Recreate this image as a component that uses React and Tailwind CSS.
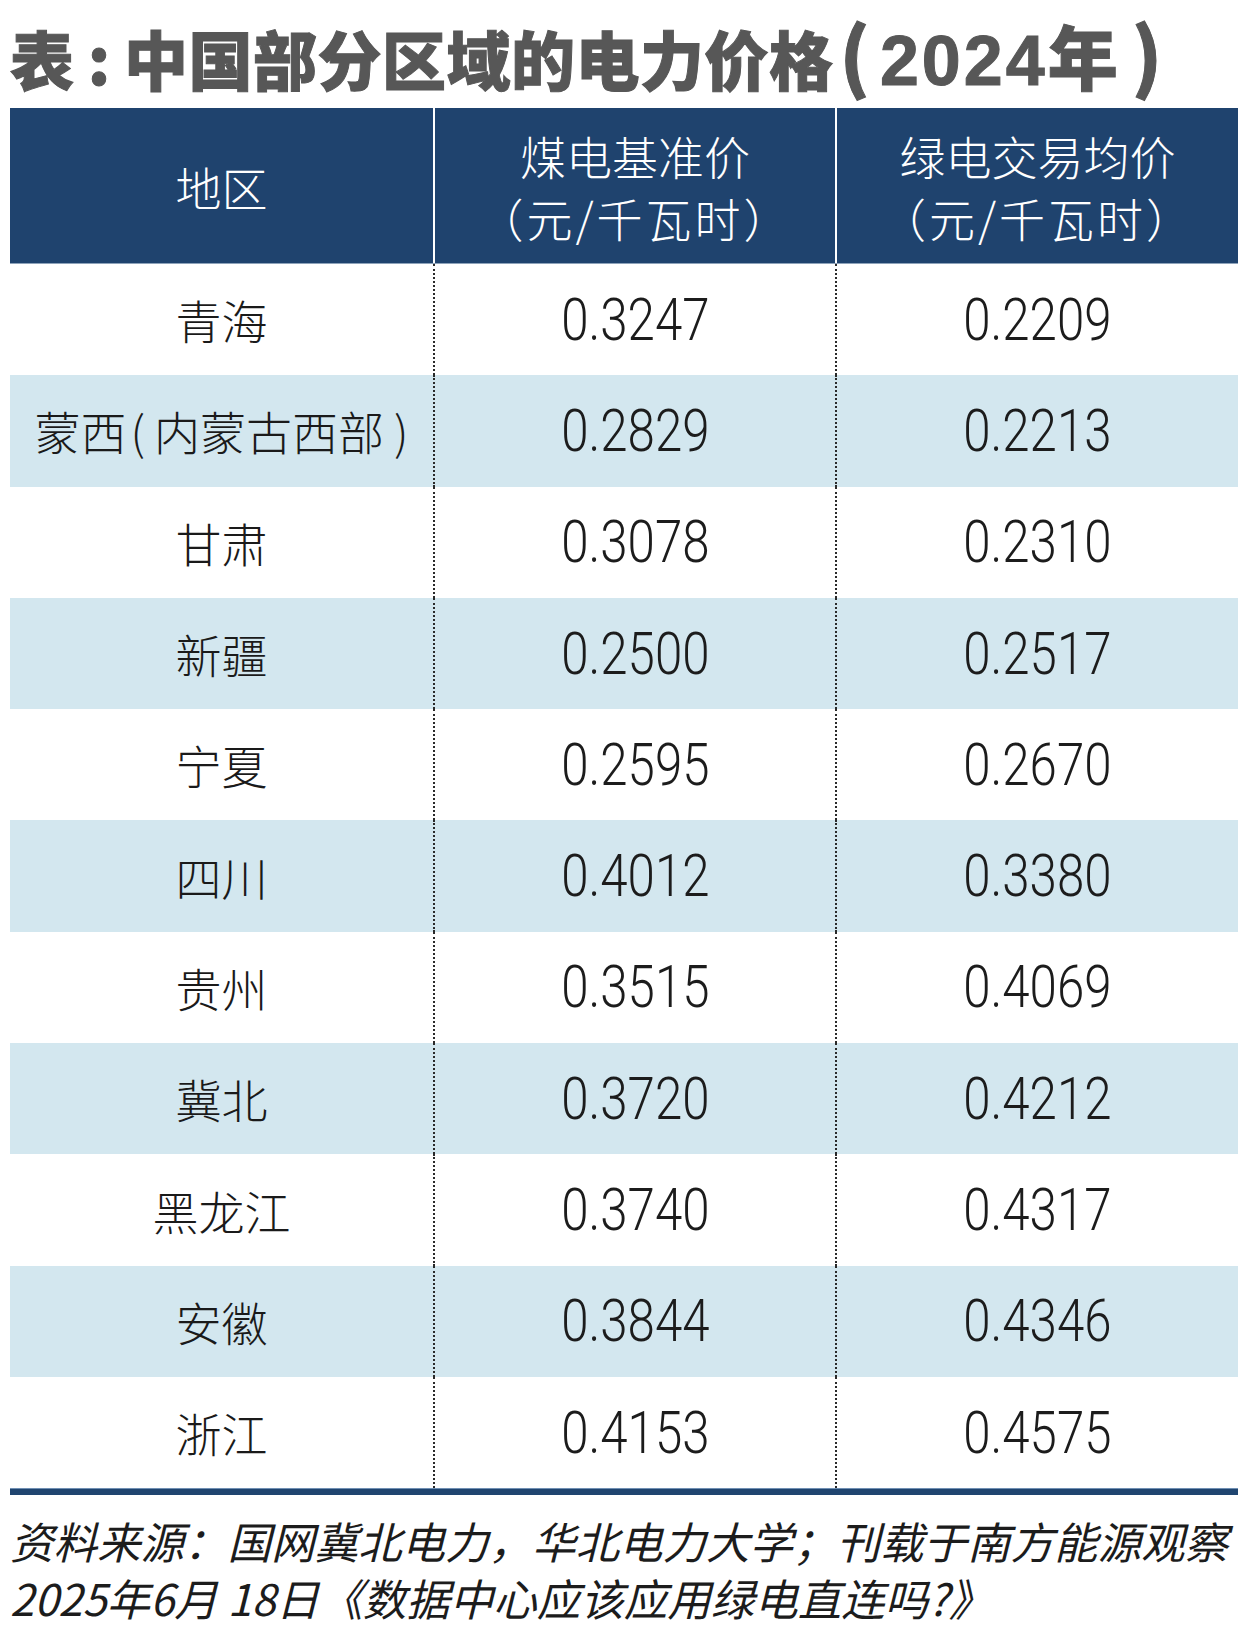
import React from "react";

const rows = [
  ["青海", "0.3247", "0.2209"],
  ["蒙西(内蒙古西部)", "0.2829", "0.2213"],
  ["甘肃", "0.3078", "0.2310"],
  ["新疆", "0.2500", "0.2517"],
  ["宁夏", "0.2595", "0.2670"],
  ["四川", "0.4012", "0.3380"],
  ["贵州", "0.3515", "0.4069"],
  ["冀北", "0.3720", "0.4212"],
  ["黑龙江", "0.3740", "0.4317"],
  ["安徽", "0.3844", "0.4346"],
  ["浙江", "0.4153", "0.4575"],
];

const cjk = { fontFamily: '"Noto Sans CJK SC", "Noto Sans", sans-serif' };
const num = { fontFamily: 'Roboto, "Liberation Sans", sans-serif' };
const latinBold = { fontFamily: '"Liberation Sans", Arial, sans-serif' };

function Num({ value }) {
  return (
    <span className="inline-block scale-x-[0.82] text-[60px] font-light leading-none text-[#1c1c1c]" style={num}>
      {value}
    </span>
  );
}

function Region({ name }) {
  // 蒙西 row: tight parens like the print layout
  if (name.includes("(")) {
    const [a, rest] = name.split("(");
    const b = rest.replace(")", "");
    return (
      <span>
        {a}
        <span className="ml-[4px] mr-[9px]">(</span>
        {b}
        <span className="ml-[10px]">)</span>
      </span>
    );
  }
  return <span>{name}</span>;
}

export default function App() {
  return (
    <div className="w-[1250px] h-[1636px] bg-white overflow-hidden" style={cjk}>
      <div className="h-[108px] flex items-center pl-[10px] pb-[4px]">
        <h1 className="flex items-baseline text-[64px] font-black leading-[1.25] text-[#575757] whitespace-nowrap [-webkit-text-stroke:1px_#575757]">
          <span>表</span>
          <span className="inline-block w-[50px] text-center">:</span>
          <span className="tracking-[0.5px]">中国部分区域的电力价格</span>
          <span className="text-[76px] leading-[1.4] px-[3px] ml-[3px] mr-[7px]">(</span>
          <span className="text-[70px] font-bold tracking-[3px]" style={latinBold}>2024</span>
          <span className="text-[70px]">年</span>
          <span className="text-[76px] leading-[1.4] px-[3px] ml-[11px]">)</span>
        </h1>
      </div>

      <div className="ml-[10px] w-[1228px]">
        {/* header */}
        <div className="grid grid-cols-[423px_402px_403px] h-[156px] bg-[#1f436e] border-b border-[#8ea3ba] text-white font-light">
          <div className="flex items-center justify-center text-[46px] leading-[62px]">地区</div>
          <div className="flex flex-col items-center justify-center border-l-2 border-white text-[46px] leading-[62px]">
            <div>煤电基准价</div>
            <div className="tracking-[3px]">（元/千瓦时）</div>
          </div>
          <div className="flex flex-col items-center justify-center border-l-2 border-white text-[46px] leading-[62px]">
            <div>绿电交易均价</div>
            <div className="tracking-[3px]">（元/千瓦时）</div>
          </div>
        </div>

        {/* body */}
        {rows.map((r, i) => (
          <div
            key={r[0]}
            className={
              "grid grid-cols-[423px_402px_403px] h-[111.3px] " +
              (i % 2 === 1 ? "bg-[#d3e7ef]" : "bg-white")
            }
          >
            <div className="flex items-center justify-center text-[46px] font-light text-[#1a1a1a] whitespace-nowrap">
              <Region name={r[0]} />
            </div>
            <div className="flex items-center justify-center border-l-2 border-dotted border-[#2a2a2a]">
              <Num value={r[1]} />
            </div>
            <div className="flex items-center justify-center border-l-2 border-dotted border-[#2a2a2a]">
              <Num value={r[2]} />
            </div>
          </div>
        ))}

        <div className="h-[7px] bg-[#204570] border-t border-[#6f8fb3]"></div>
      </div>

      <div className="pl-[10px] pt-[17px] italic text-[43.5px] leading-[57px] text-[#1c1c1c] whitespace-nowrap">
        <div>资料来源：国网冀北电力，华北电力大学；刊载于南方能源观察</div>
        <div>2025年6月 18日《数据中心应该应用绿电直连吗?》</div>
      </div>
    </div>
  );
}
